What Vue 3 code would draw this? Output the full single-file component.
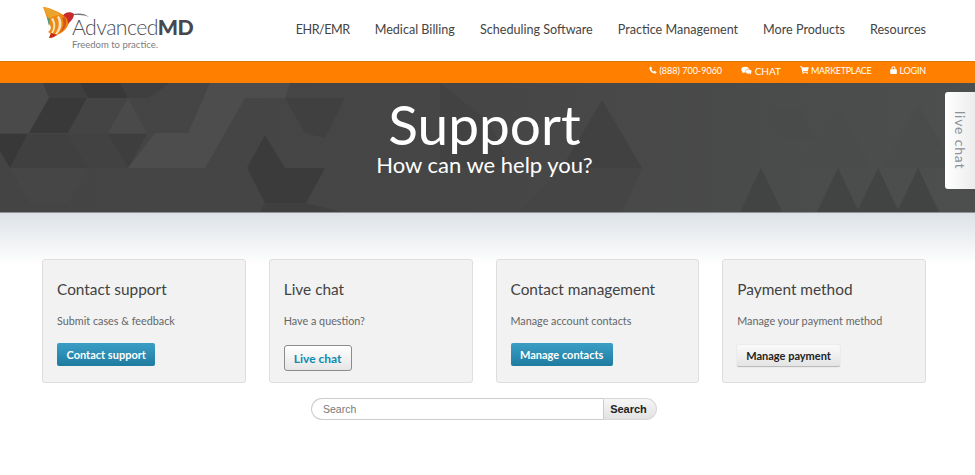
<template>
  <div class="page">
    <header class="top">
      <a class="logo">
        <svg class="bird" viewBox="0 0 60 34" width="60" height="34">
          <path d="M1 1 C9 2 17 6 23 10 C26 11 27 13 27 16 C26 22 21 27 15 29 C12 31 10 32 7 32 L9 28 L6 26 C9 24 10 21 7 18 C5 12 3 6 1 1Z" fill="#ee8a12" />
          <path d="M1 1 C8 2 14 5 19 9 C14 9 10 10 7 13 C5 9 3 5 1 1Z" fill="#eaa42c" />
          <path d="M5 11 L8 13 L7 20 L6 16Z" fill="#4f9a86" />
          <path d="M9 13 C12 17 12 23 9 27 L11 27 C14 22 14 17 11 12Z" fill="#fbe3c2" />
          <path d="M15 11 C18 17 17 23 13 28 L15 28 C20 23 21 16 17 10Z" fill="#fbe3c2" />
          <path d="M20 12 C23 17 21 23 17 27 C23 24 26 18 23 11Z" fill="#d9541c" />
          <path d="M7 32 L9 27 L15 29 C12 31 10 32 7 32Z" fill="#c8281e" />
          <path d="M21 10 C22 6 29 5 32 8 C32 12 29 15 26 18 C26 14 25 11 21 10Z" fill="#c62a2a" />
          <path d="M31 8 C37 7 43 7 47 11 C43 9 37 9 32 9Z" fill="#77787b" />
        </svg>
        <span class="wordmark">Advanced<b>MD</b></span>
        <span class="tagline">Freedom to practice.</span>
      </a>
      <nav class="main-nav">
        <a v-for="item in navItems" :key="item">{{ item }}</a>
      </nav>
    </header>

    <div class="util-bar">
      <a>
        <svg viewBox="0 0 12 12" width="8" height="8"><path d="M2.6.6 4.7 3.4 3.5 4.8C4.3 6.4 5.6 7.7 7.2 8.500L8.600 7.300 11.400 9.400C11 10.700 10 11.500 8.800 11.400 4.600 10.900 1.100 7.400.6 3.200.5 2 1.300 1 2.600.6Z" fill="#fff" /></svg>
        (888) 700-9060
      </a>
      <a class="chat">
        <svg viewBox="0 0 16 12" width="11" height="9"><ellipse cx="6" cy="4.700" rx="5.600" ry="4.300" fill="#fff" /><path d="M2.500 7 2 10 5.500 8Z" fill="#fff" /><ellipse cx="11" cy="7.500" rx="4.600" ry="3.500" fill="#fff" stroke="#ff8000" stroke-width=".7" /><path d="M13 10 14.500 12 14.500 9Z" fill="#fff" /></svg>
        CHAT
      </a>
      <a class="market">
        <svg viewBox="0 0 13 12" width="9" height="8"><path d="M0 .5H2.500L3 2H13L11.500 7.500H4.200L4.500 8.800H11.500V10H3.300L1.700 1.800H0Z" fill="#fff" /><circle cx="4.500" cy="11" r="1" fill="#fff" /><circle cx="10.500" cy="11" r="1" fill="#fff" /></svg>
        MARKETPLACE
      </a>
      <a class="login">
        <svg viewBox="0 0 10 12" width="7" height="8"><path d="M1 5H2V3.300C2 1.500 3.300.3 5 .3S8 1.500 8 3.300V5H9C9.500 5 10 5.400 10 6V11C10 11.600 9.500 12 9 12H1C.5 12 0 11.600 0 11V6C0 5.400.5 5 1 5ZM3.500 5H6.500V3.300C6.500 2.400 5.900 1.800 5 1.800S3.500 2.400 3.500 3.300Z" fill="#fff" fill-rule="evenodd" /></svg>
        LOGIN
      </a>
    </div>

    <section class="hero">
      <svg class="hero-bg" viewBox="0 0 975 130" width="975" height="130" preserveAspectRatio="none">
        <polygon v-for="(t, i) in heroShapes" :key="i" :points="t.points" :fill="t.fill" />
      </svg>
      <h1>Support</h1>
      <p>How can we help you?</p>
    </section>

    <main class="content">
      <div class="cards">
        <div v-for="card in cards" :key="card.title" class="card">
          <h2>{{ card.title }}</h2>
          <p>{{ card.text }}</p>
          <button class="btn" :class="card.kind">{{ card.button }}</button>
        </div>
      </div>
      <form class="search" @submit.prevent>
        <input type="text" placeholder="Search" />
        <button>Search</button>
      </form>
    </main>

    <div class="chat-tab"><span>live chat</span></div>
  </div>
</template>

<script setup>
const navItems = ['EHR/EMR', 'Medical Billing', 'Scheduling Software', 'Practice Management', 'More Products', 'Resources']

const cards = [
  { title: 'Contact support', text: 'Submit cases & feedback', button: 'Contact support', kind: 'blue' },
  { title: 'Live chat', text: 'Have a question?', button: 'Live chat', kind: 'outline' },
  { title: 'Contact management', text: 'Manage account contacts', button: 'Manage contacts', kind: 'blue' },
  { title: 'Payment method', text: 'Manage your payment method', button: 'Manage payment', kind: 'plain' }
]

// background triangles, eyeballed from the banner
const heroShapes = [
  { points: '0,0 43,0 49,15 29,50 0,50', fill: '#4a4a4a' },
  { points: '43,0 80,0 88,15 49,15', fill: '#3f3f3f' },
  { points: '80,0 120,0 128,15 88,15', fill: '#383838' },
  { points: '120,0 170,0 148,15 128,15', fill: '#3f3f3f' },
  { points: '49,15 87,15 68,50 29,50', fill: '#393939' },
  { points: '87,15 128,15 108,50 68,50', fill: '#444444' },
  { points: '128,15 147,50 108,50', fill: '#4a4a4a' },
  { points: '0,51 28,51 10,85 0,68', fill: '#383838' },
  { points: '29,51 68,51 88,85 10,85', fill: '#404040' },
  { points: '68,51 108,51 128,85 88,85', fill: '#424242' },
  { points: '108,51 147,51 128,85', fill: '#3e3e3e' },
  { points: '10,85 88,85 68,120 30,120', fill: '#464646' },
  { points: '210,0 290,0 285,15 245,15 205,85 128,85 155,50 188,50', fill: '#4d4d4d' },
  { points: '265,52 285,85 325,85 306,120 265,120 247,85', fill: '#3b3b3b' },
  { points: '285,15 345,15 325,55 305,50', fill: '#404040' },
  { points: '305,120 340,129 260,129 265,120', fill: '#3f3f3f' },
  { points: '440,0 490,40 510,85 440,85', fill: '#424242' },
  { points: '602,17 642,85 562,85', fill: '#414141' },
  { points: '562,85 642,85 622,129 520,129', fill: '#454545' },
  { points: '761,85 782,129 740,129', fill: '#424343' },
  { points: '838,85 859,129 817,129', fill: '#424343' },
  { points: '878,85 899,129 857,129', fill: '#424343' },
  { points: '918,85 939,129 897,129', fill: '#424343' },
  { points: '765,25 800,25 815,55 781,55', fill: '#494a4a' },
  { points: '838,22 872,85 800,85', fill: '#4a4b4b' },
  { points: '918,22 955,85 882,85', fill: '#4a4b4b' }
]
</script>

<style scoped>
.page {
  position: relative;
  width: 975px;
  height: 475px;
  overflow: hidden;
  background: #fff;
  font-family: Lato, "Open Sans", sans-serif;
}

.top {
  display: flex;
  justify-content: space-between;
  height: 61px;
  padding: 0 49px 0 42px;
}

.logo {
  position: relative;
  display: flex;
  flex-direction: column;
  padding: 16px 0 0 30px;
}

.bird {
  position: absolute;
  left: 0;
  top: 6px;
}

.wordmark {
  position: relative;
  font-size: 21.300px;
  font-weight: 300;
  line-height: 23px;
  letter-spacing: -0.6px;
  color: #4d4e52;
}

.wordmark b {
  font-weight: 900;
  color: #47484c;
}

.tagline {
  font-size: 9.500px;
  line-height: 11px;
  color: #7c7d80;
}

.main-nav {
  display: flex;
  align-items: center;
  gap: 25px;
  padding-bottom: 3px;
  font-size: 12.600px;
  color: #444;
}

.main-nav a:first-child {
  letter-spacing: -0.5px;
}

.util-bar {
  display: flex;
  justify-content: flex-end;
  align-items: center;
  gap: 19px;
  height: 22px;
  padding: 0 49px 4px 0;
  border-top: 1px solid #d9780b;
  box-sizing: border-box;
  background: #ff8000;
  color: #fff;
  font-size: 9px;
}

.util-bar .chat {
  font-size: 10px;
}

.util-bar .market {
  letter-spacing: -0.3px;
}

.util-bar .login {
  letter-spacing: -0.2px;
}

.hero {
  position: relative;
  height: 130px;
  padding-right: 6px;
  overflow: hidden;
  background: linear-gradient(90deg, #444 0%, #464646 50%, #4d4e4e 100%);
  color: #fff;
  text-align: center;
  border-bottom: 1px solid #8f9295;
  box-sizing: border-box;
}

.hero-bg {
  position: absolute;
  left: 0;
  top: 0;
}

.hero h1 {
  position: relative;
  margin: 13px 0 0;
  font-size: 55px;
  font-weight: 400;
  line-height: 56px;
}

.hero p {
  position: relative;
  margin: 0;
  font-size: 22px;
  line-height: 26px;
}

.content {
  height: 262px;
  padding: 46px 49px 0 42px;
  box-sizing: border-box;
  background: linear-gradient(#dde2e7, #fff 52px);
}

.cards {
  display: grid;
  grid-template-columns: repeat(4, 1fr);
  gap: 23px;
}

.card {
  height: 124px;
  padding: 20px 14px 0;
  box-sizing: border-box;
  background: #f2f2f2;
  border: 1px solid #dedede;
  border-radius: 3px;
}

.card h2 {
  margin: 0;
  font-size: 15.400px;
  font-weight: 400;
  line-height: 19px;
  color: #424242;
}

.card p {
  margin: 15px 0 0;
  font-size: 10.800px;
  line-height: 14px;
  color: #666;
}

.btn {
  display: block;
  height: 23px;
  margin-top: 15px;
  padding: 0 9.500px;
  border-radius: 2px;
  font-family: inherit;
  font-size: 11px;
  font-weight: 700;
}

.btn.blue {
  border: 0;
  background: linear-gradient(#3a9fc5, #1f7ba0);
  color: #fff;
}

.btn.outline {
  height: 26px;
  margin-top: 17px;
  padding: 0 9px;
  border: 1px solid #8c8c8c;
  border-radius: 3px;
  background: linear-gradient(#fff, #e6e6e6);
  color: #0d8bb0;
  font-size: 12px;
}

.btn.plain {
  height: 22px;
  margin-top: 17px;
  padding: 0 9px;
  border: 0;
  border-bottom: 1px solid #bbb;
  background: linear-gradient(#fafafa, #e4e4e4);
  box-shadow: 0 0 1px #aaa;
  color: #222;
}

.search {
  display: flex;
  width: 346px;
  height: 22px;
  margin: 15px auto 0;
}

.search input {
  flex: 1;
  min-width: 0;
  padding: 0 11px;
  border: 1px solid #ccc;
  border-right: 0;
  border-radius: 11px 0 0 11px;
  outline: 0;
  font-family: "Liberation Sans", sans-serif;
  font-size: 10.500px;
}

.search input::placeholder {
  color: #777;
}

.search button {
  width: 54px;
  padding: 0 3px 0 0;
  border: 1px solid #d8d8d8;
  border-left: 1px solid #ccc;
  border-radius: 0 11px 11px 0;
  background: linear-gradient(#f6f6f6, #e2e2e2);
  font-family: "Liberation Sans", sans-serif;
  font-size: 11px;
  font-weight: 700;
  color: #222;
}

.chat-tab {
  position: absolute;
  top: 92px;
  right: 0;
  display: flex;
  align-items: center;
  justify-content: center;
  width: 30px;
  height: 97px;
  border-radius: 3px 0 0 3px;
  background: linear-gradient(90deg, #fff, #ececec);
  color: #8a9299;
  font-size: 14px;
  letter-spacing: 0.8px;
}

.chat-tab span {
  writing-mode: vertical-rl;
}
</style>
